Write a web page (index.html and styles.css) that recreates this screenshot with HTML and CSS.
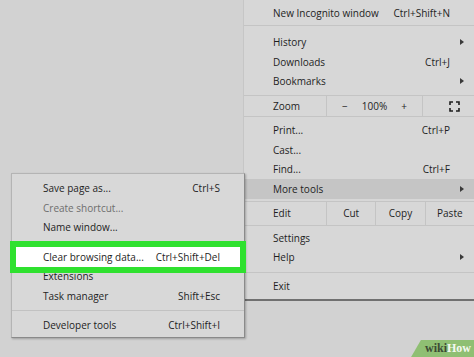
FILE: index.html
```html
<!DOCTYPE html>
<html lang="en">
<head>
  <meta charset="UTF-8">
  <title>Chrome menu - More tools</title>
  <link rel="stylesheet" href="styles.css">
</head>
<body>
  <div class="desktop">

    <div class="main-menu">
      <div class="group top">
        <div class="item"><span class="label">New Incognito window</span><span class="key">Ctrl+Shift+N</span><span class="arrow"></span></div>
      </div>
      <div class="group g2">
        <div class="item"><span class="label">History</span><span class="key"></span><span class="arrow"><i class="tri"></i></span></div>
        <div class="item"><span class="label">Downloads</span><span class="key">Ctrl+J</span><span class="arrow"></span></div>
        <div class="item"><span class="label">Bookmarks</span><span class="key"></span><span class="arrow"><i class="tri"></i></span></div>
      </div>
      <div class="zoom-row">
        <div class="cell-label">Zoom</div>
        <div class="cell zoom-ctl"><span>−</span><span>100%</span><span>+</span></div>
        <div class="cell full">
          <svg width="11" height="11" viewBox="0 0 11 11" fill="none" stroke="#1e1e1e" stroke-width="1.6">
            <path d="M1 4V1h3M7 1h3v3M10 7v3H7M4 10H1V7"/>
          </svg>
        </div>
      </div>
      <div class="group g4">
        <div class="item"><span class="label">Print...</span><span class="key">Ctrl+P</span><span class="arrow"></span></div>
        <div class="item"><span class="label">Cast...</span><span class="key"></span><span class="arrow"></span></div>
        <div class="item"><span class="label">Find...</span><span class="key">Ctrl+F</span><span class="arrow"></span></div>
        <div class="item active"><span class="label">More tools</span><span class="key"></span><span class="arrow"><i class="tri"></i></span></div>
      </div>
      <div class="edit-row">
        <div class="cell-label">Edit</div>
        <div class="cell">Cut</div>
        <div class="cell">Copy</div>
        <div class="cell">Paste</div>
      </div>
      <div class="group g6">
        <div class="item"><span class="label">Settings</span><span class="key"></span><span class="arrow"></span></div>
        <div class="item"><span class="label">Help</span><span class="key"></span><span class="arrow"><i class="tri"></i></span></div>
      </div>
      <div class="group g7">
        <div class="item"><span class="label">Exit</span><span class="key"></span><span class="arrow"></span></div>
      </div>
    </div>

    <div class="sub-menu">
      <div class="sgroup s1">
        <div class="sitem"><span class="label">Save page as...</span><span class="key">Ctrl+S</span></div>
        <div class="sitem disabled"><span class="label">Create shortcut...</span><span class="key"></span></div>
        <div class="sitem"><span class="label">Name window...</span><span class="key"></span></div>
      </div>
      <div class="sgroup s2">
        <div class="sitem marked"><span class="label">Clear browsing data...</span><span class="key">Ctrl+Shift+Del</span></div>
        <div class="sitem"><span class="label">Extensions</span><span class="key"></span></div>
        <div class="sitem"><span class="label">Task manager</span><span class="key">Shift+Esc</span></div>
      </div>
      <div class="sgroup s3">
        <div class="sitem"><span class="label">Developer tools</span><span class="key">Ctrl+Shift+I</span></div>
      </div>
    </div>

    <div class="wikihow"><span class="wiki">wiki</span><span class="how">How</span></div>
  </div>
</body>
</html>
```

FILE: styles.css
```css
* { box-sizing: border-box; margin: 0; padding: 0; }
body {
  font-family: 'Open Sans', 'Noto Sans', sans-serif;
  font-size: 10px;
  color: #1e1e1e;
  background: #d2d2d2;
  overflow: hidden;
}
.desktop {
  position: relative;
  width: 474px;
  height: 357px;
  background: #d2d2d2;
}

/* main chrome menu */
.main-menu {
  margin-left: 243px;
  width: 231px;
  background: #d7d7d7;
  border-left: 1px solid #c6c6c6;
  border-bottom: 2px solid #707070;
}
.group { border-bottom: 1px solid #c4c4c4; }
.group.top { padding: 3px 0 2.5px; }
.group.g2 { padding: 6.5px 0 4px; }
.group.g4 { padding: 3.5px 0 2px; }
.group.g6 { padding: 2.5px 0 5px; }
.group.g7 { padding: 3.5px 0 2.5px; border-bottom: none; }
.item {
  display: flex;
  align-items: center;
  height: 19.5px;
  padding-left: 29px;
}
.item.active { background: #c5c5c5; }
.item .label { flex: 1; }
.item .key { text-align: right; }
.item .arrow {
  width: 24px;
  display: flex;
  justify-content: center;
  align-items: center;
}
.tri {
  width: 0;
  height: 0;
  border-top: 3.5px solid transparent;
  border-bottom: 3.5px solid transparent;
  border-left: 4.5px solid #3a3a3a;
}

.zoom-row, .edit-row {
  display: flex;
  border-bottom: 1px solid #c4c4c4;
}
.zoom-row { height: 21px; }
.edit-row { height: 24px; }
.cell-label {
  width: 82px;
  padding-left: 29px;
  display: flex;
  align-items: center;
}
.cell {
  display: flex;
  align-items: center;
  justify-content: center;
  border-left: 1px solid #c4c4c4;
  flex: 1;
}
.zoom-ctl {
  flex: none;
  width: 96px;
  justify-content: space-between;
  padding: 0 15px 0 15px;
}
.full { flex: 1; padding-left: 12px; }

/* more tools submenu */
.sub-menu {
  position: absolute;
  left: 11px;
  top: 173px;
  width: 234px;
  height: 165px;
  background: #d8d8d8;
  border: 1px solid #b4b4b4;
  border-right-color: #8a8a8a;
  border-bottom-color: #8a8a8a;
  box-shadow: 1px 1px 2px rgba(0, 0, 0, 0.25);
}
.sgroup { border-bottom: 1px solid #c2c2c2; }
.sgroup.s1 { padding: 4.5px 0 4px; }
.sgroup.s2 { padding: 5px 0 4.5px; }
.sgroup.s3 { padding: 4.5px 0 0; border-bottom: none; }
.sitem {
  display: flex;
  align-items: center;
  height: 19.5px;
  padding: 0 24px 0 31px;
}
.sitem .label { flex: 1; }
.sitem.disabled { color: #6e6e6e; }

/* green highlight frame round the target item */
.sitem.marked {
  position: relative;
  z-index: 1;
  margin: 0 4px;
  padding: 0 20px 0 27px;
  background: #fff;
  outline: 6px solid #2fe12f;
}

/* watermark */
.wikihow {
  position: absolute;
  right: -6px;
  bottom: 0;
  width: 64px;
  height: 17px;
  background: #8fbf73;
  transform: skewX(-30deg);
  display: flex;
  align-items: center;
  justify-content: center;
  font-family: 'Liberation Serif', serif;
  font-weight: bold;
  font-size: 12px;
}
.wikihow span { transform: skewX(30deg); display: inline-block; }
.wiki { color: #3c4a34; }
.how { color: #f4f8f0; }
```
